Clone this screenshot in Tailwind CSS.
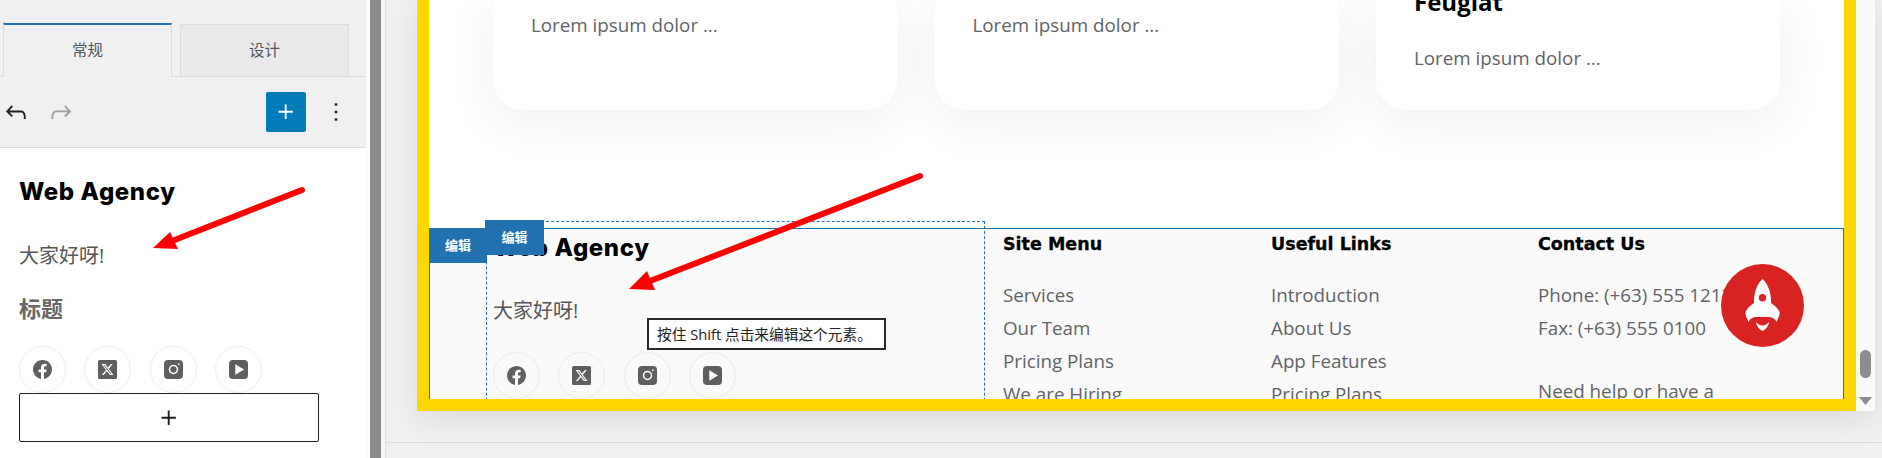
<!DOCTYPE html>
<html lang="zh-CN">
<head>
  <meta charset="UTF-8">
  <title>Web Agency footer editor</title>
  <script src="https://cdn.jsdelivr.net/npm/@tailwindcss/browser@4"></script>
</head>
<body class="relative flex w-[1882px] h-[458px] overflow-hidden bg-[#f0f0f1] font-['Open_Sans','Noto_Sans_CJK_SC',sans-serif]">
  <svg class="hidden">
    <symbol id="fb" viewBox="0 0 24 24"><path fill="#5f5f5f" d="M24 12.073c0-6.627-5.373-12-12-12s-12 5.373-12 12c0 5.99 4.388 10.954 10.125 11.854v-8.385H7.078v-3.47h3.047V9.43c0-3.007 1.792-4.669 4.533-4.669 1.312 0 2.686.235 2.686.235v2.953H15.83c-1.491 0-1.956.925-1.956 1.874v2.25h3.328l-.532 3.47h-2.796v8.385C19.612 23.027 24 18.062 24 12.073z"/></symbol>
    <symbol id="tw" viewBox="0 0 24 24"><rect width="24" height="24" rx="2" fill="#5f5f5f"/><path fill="#fff" transform="translate(3.6 3.6) scale(.7)" d="M18.244 2.25h3.308l-7.227 8.26 8.502 11.24H16.17l-5.214-6.817L4.99 21.75H1.68l7.73-8.835L1.254 2.25H8.08l4.713 6.231zm-1.161 17.52h1.833L7.084 4.126H5.117z"/></symbol>
    <symbol id="ig" viewBox="0 0 24 24"><rect width="24" height="24" rx="5" fill="#5f5f5f"/><circle cx="12" cy="12" r="5" fill="none" stroke="#fff" stroke-width="2"/><circle cx="18.8" cy="5.2" r="1.1" fill="#fff"/></symbol>
    <symbol id="yt" viewBox="0 0 24 24"><rect width="24" height="24" rx="5" fill="#5f5f5f"/><path fill="#fff" d="M8 5.5 19 12 8 18.500z"/></symbol>
  </svg>

  <!-- left panel -->
  <aside class="w-[366px] h-full shrink-0 flex flex-col bg-white">
    <div class="h-[77px] flex items-end gap-[8px] pl-[3px] bg-[#f0f0f1] border-b border-[#dcdcde]">
      <div class="w-[169px] h-[54px] -mb-px flex items-center justify-center bg-[#f0f0f1] border-t-2 border-t-[#2271b1] border-x border-x-[#dcdcde] text-[15.5px] text-[#50575e]">常规</div>
      <div class="w-[169px] h-[52px] flex items-center justify-center bg-[#e9e9eb] border border-b-0 border-[#dcdcde] text-[15.5px] text-[#50575e]">设计</div>
    </div>
    <div class="h-[71px] flex items-center bg-[#f0f0f1] border-b border-[#dcdcde]">
      <svg class="ml-px w-[30px] h-[30px]" viewBox="0 0 24 24" fill="#1e1e1e"><path d="M18.3 11.700c-.6-.6-1.400-.9-2.300-.9H6.700l2.900-3.300-1.100-1-4.500 5L8.500 16l1-1-2.700-2.700H16c.5 0 .9.2 1.300.5 1 1 1 3.400 1 4.500v.3h1.500v-.2c0-1.500 0-4.300-1.500-5.700z"/></svg>
      <svg class="ml-[15px] w-[30px] h-[30px]" viewBox="0 0 24 24" fill="#a0a0a0"><path d="M15.600 6.500l-1.100 1 2.900 3.300H8c-.9 0-1.700.3-2.300.9-1.400 1.500-1.400 4.200-1.400 5.600v.2h1.500v-.3c0-1.100 0-3.500 1-4.500.3-.3.7-.5 1.300-.5h9.200L14.500 15l1.100 1.100 4.600-4.600-4.600-5z"/></svg>
      <div class="ml-[190px] w-[40px] h-[40px] flex items-center justify-center rounded-[2px] bg-[#007cba]">
        <svg class="w-[30px] h-[30px]" viewBox="0 0 24 24" fill="#fff"><path d="M11 12.500V17.500H12.500V12.500H17.500V11H12.500V6H11V11H6V12.500H11Z"/></svg>
      </div>
      <svg class="ml-[15px] w-[30px] h-[30px]" viewBox="0 0 24 24" fill="#1e1e1e"><path d="M13 19h-2v-2h2v2zm0-6h-2v-2h2v2zm0-6h-2V5h2v2z"/></svg>
    </div>
    <div class="pl-[19px] flex flex-col">
      <h2 class="mt-[27px] h-[34px] leading-[34px] text-[24px] tracking-[0.6px] font-extrabold text-black font-['Inter',sans-serif]">Web Agency</h2>
      <p class="mt-[33px] h-[28px] leading-[28px] text-[20px] text-[#555]">大家好呀!</p>
      <p class="mt-[24px] h-[28px] leading-[28px] text-[22px] font-bold text-[#666]">标题</p>
      <div class="mt-[24px] flex gap-[18.4px]">
        <a class="w-[47px] h-[47px] flex items-center justify-center rounded-full border border-[#ececec]"><svg class="w-[19px] h-[19px]"><use href="#fb"/></svg></a>
        <a class="w-[47px] h-[47px] flex items-center justify-center rounded-full border border-[#ececec]"><svg class="w-[19px] h-[19px]"><use href="#tw"/></svg></a>
        <a class="w-[47px] h-[47px] flex items-center justify-center rounded-full border border-[#ececec]"><svg class="w-[19px] h-[19px]"><use href="#ig"/></svg></a>
        <a class="w-[47px] h-[47px] flex items-center justify-center rounded-full border border-[#ececec]"><svg class="w-[19px] h-[19px]"><use href="#yt"/></svg></a>
      </div>
      <div class="w-[300px] h-[49px] flex items-center justify-center rounded-[2px] border border-[#1e1e1e] bg-white">
        <svg class="w-[30px] h-[30px]" viewBox="0 0 24 24" fill="#1e1e1e"><path d="M11 12.500V17.500H12.500V12.500H17.500V11H12.500V6H11V11H6V12.500H11Z"/></svg>
      </div>
    </div>
  </aside>

  <!-- splitter -->
  <div class="w-[4px] h-full bg-[#fafafa]"></div>
  <div class="w-[11px] h-full bg-[#8c8c8c]"></div>
  <div class="w-[4px] h-full bg-[#f7f7f7]"></div>

  <!-- canvas -->
  <main class="flex-1 h-full flex flex-col border-l border-[#e0e0e0]">
    <div class="h-[443px] border-b border-[#dcdcde] flex items-start pl-[31px]">
      <div class="flex shadow-[0_8px_30px_rgba(0,0,0,0.09)]">
        <div class="relative w-[1439px] h-[411px] border-x-[12px] border-b-[12px] border-[#ffd700] bg-white overflow-hidden flex flex-col">
          <!-- cards -->
          <div class="h-[110px] flex gap-[37.5px] pl-[64px] shrink-0">
            <div class="w-[404px] h-[110px] rounded-b-[30px] bg-white shadow-[0_10px_50px_rgba(30,40,80,0.07)] pl-[38px] pt-[12px] text-[18.8px] leading-[26px] text-[#5f6368]">Lorem ipsum dolor ...</div>
            <div class="w-[404px] h-[110px] rounded-b-[30px] bg-white shadow-[0_10px_50px_rgba(30,40,80,0.07)] pl-[38px] pt-[12px] text-[18.8px] leading-[26px] text-[#5f6368]">Lorem ipsum dolor ...</div>
            <div class="w-[404px] h-[110px] rounded-b-[30px] bg-white shadow-[0_10px_50px_rgba(30,40,80,0.07)] pl-[38px] text-[18.8px] leading-[26px] text-[#5f6368]">
              <p class="-mt-[14px] h-[32px] leading-[32px] text-[24px] font-bold text-black">Feugiat</p>
              <p class="mt-[27px]">Lorem ipsum dolor ...</p>
            </div>
          </div>
          <!-- footer -->
          <div class="relative mt-[118px] h-[400px] shrink-0 flex bg-[#fafafa] border-t border-x border-[#2271b1]">
            <span class="absolute left-[-1px] top-[-1px] w-[58px] h-[35px] flex items-center justify-center bg-[#2271b1] text-white text-[13px] font-bold">编辑</span>
            <div class="relative ml-[56px] -mt-[8px] w-[499px] h-[200px] pl-[6px] border border-dashed border-[#2271b1] border-b-0">
              <span class="absolute z-10 left-[-2px] top-[-2px] w-[59px] h-[35px] flex items-center justify-center bg-[#2271b1] text-white text-[13px] font-bold">编辑</span>
              <h2 class="mt-[9px] h-[34px] leading-[34px] text-[24px] tracking-[0.6px] font-extrabold text-black font-['Inter',sans-serif]">Web Agency</h2>
              <p class="mt-[32px] h-[28px] leading-[28px] text-[20px] text-[#555]">大家好呀!</p>
              <div class="mt-[27px] flex gap-[18.4px]">
                <a class="w-[47px] h-[47px] flex items-center justify-center rounded-full border border-[#ececec]"><svg class="w-[19px] h-[19px]"><use href="#fb"/></svg></a>
                <a class="w-[47px] h-[47px] flex items-center justify-center rounded-full border border-[#ececec]"><svg class="w-[19px] h-[19px]"><use href="#tw"/></svg></a>
                <a class="w-[47px] h-[47px] flex items-center justify-center rounded-full border border-[#ececec]"><svg class="w-[19px] h-[19px]"><use href="#ig"/></svg></a>
                <a class="w-[47px] h-[47px] flex items-center justify-center rounded-full border border-[#ececec]"><svg class="w-[19px] h-[19px]"><use href="#yt"/></svg></a>
              </div>
              <div class="absolute left-[160px] top-[96px] w-[239px] h-[32px] flex items-center pl-[8px] bg-white border-2 border-[#2a2a2a] text-[14.7px] text-[#222] whitespace-nowrap">按住 Shift 点击来编辑这个元素。</div>
            </div>
            <div class="ml-[18px] w-[268px]">
              <h3 class="h-[30px] leading-[30px] text-[17.5px] font-bold text-black font-['DejaVu_Sans',sans-serif] [-webkit-text-stroke:0.3px_black]">Site Menu</h3>
              <ul class="mt-[20px] text-[18.8px] leading-[33px] text-[#5f6368]">
                <li>Services</li><li>Our Team</li><li>Pricing Plans</li><li>We are Hiring</li>
              </ul>
            </div>
            <div class="w-[267px]">
              <h3 class="h-[30px] leading-[30px] text-[17.5px] font-bold text-black font-['DejaVu_Sans',sans-serif] [-webkit-text-stroke:0.3px_black]">Useful Links</h3>
              <ul class="mt-[20px] text-[18.8px] leading-[33px] text-[#5f6368]">
                <li>Introduction</li><li>About Us</li><li>App Features</li><li>Pricing Plans</li>
              </ul>
            </div>
            <div>
              <h3 class="h-[30px] leading-[30px] text-[17.5px] font-bold text-black font-['DejaVu_Sans',sans-serif] [-webkit-text-stroke:0.3px_black]">Contact Us</h3>
              <ul class="mt-[20px] text-[18.8px] leading-[33px] text-[#5f6368] whitespace-nowrap">
                <li>Phone: (+63) 555 1212</li><li>Fax: (+63) 555 0100</li>
                <li class="mt-[30px]">Need help or have a</li>
              </ul>
            </div>
          </div>
          <!-- floating button -->
          <div class="absolute left-[1292px] top-[264px] w-[83px] h-[83px] rounded-full bg-[#d92323] flex items-center justify-center">
            <svg class="w-[83px] h-[83px]" viewBox="0 0 83 83" fill="#fff">
              <path fill-rule="evenodd" d="M41.500 15C46.500 19.500 50 28 50 37L50 39C53 41 57 44 58.500 48C59 51 57 54 55.500 58C54.500 55 52 54 49 53L34 53C31 54 28.500 55 27.500 58C26 54 24 51 24.500 48C26 44 30 41 33 39L33 37C33 28 36.500 19.500 41.500 15zM41.500 30a3.700 3.700 0 1 0 0 7.400 3.700 3.700 0 0 0 0-7.400z"/>
              <path d="M35 58C37 60 39 61.500 41.500 61.500S46 60 48 58C47.500 62 45 65.500 41.500 67C38 65.500 35.500 62 35 58z"/>
            </svg>
          </div>
        </div>
        <!-- scrollbar -->
        <div class="w-[19px] h-[411px] bg-[#fafafa] flex flex-col items-center">
          <div class="mt-[350px] w-[11px] h-[28px] rounded-full bg-[#8c8c8c]"></div>
          <svg class="mt-[19px] w-[13px] h-[8px]" viewBox="0 0 13 8" fill="#8c8c8c"><path d="M0 0h13L6.500 8z"/></svg>
        </div>
      </div>
    </div>
  </main>

  <!-- annotation arrows -->
  <svg class="absolute left-0 top-0 pointer-events-none" width="1882" height="458" viewBox="0 0 1882 458">
    <g stroke="#ff0000" stroke-width="6" stroke-linecap="round" fill="none">
      <path d="M302 190 172 241"/>
      <path d="M920 176 650 281"/>
    </g>
    <g fill="#ff0000">
      <path d="M153 248 170 232 178 249z"/>
      <path d="M629 289 647 271 655 290z"/>
    </g>
  </svg>
</body>
</html>
